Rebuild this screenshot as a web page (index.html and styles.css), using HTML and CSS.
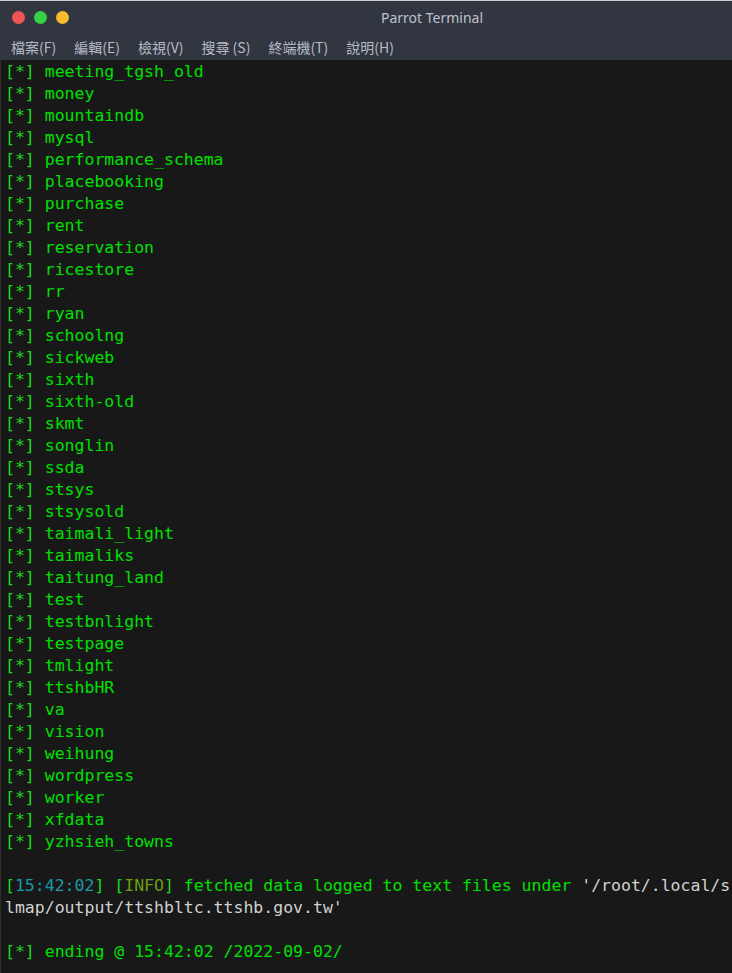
FILE: index.html
```html
<!DOCTYPE html>
<html>
<head>
<meta charset="utf-8">
<link rel="stylesheet" href="styles.css">
</head>
<body>
<div class="window">
  <div class="chrome">
    <div class="titlebar">
      <div class="lights">
        <span class="light red"></span>
        <span class="light green"></span>
        <span class="light yellow"></span>
      </div>
      <div class="title">Parrot Terminal</div>
    </div>
    <div class="menubar">
      <span class="menu">檔案(F)</span>
      <span class="menu">編輯(E)</span>
      <span class="menu">檢視(V)</span>
      <span class="menu">搜尋 (S)</span>
      <span class="menu">終端機(T)</span>
      <span class="menu">說明(H)</span>
    </div>
  </div>
  <div class="term">
<div class="ln"><span class="b">[*]</span> meeting_tgsh_old</div>
<div class="ln"><span class="b">[*]</span> money</div>
<div class="ln"><span class="b">[*]</span> mountaindb</div>
<div class="ln"><span class="b">[*]</span> mysql</div>
<div class="ln"><span class="b">[*]</span> performance_schema</div>
<div class="ln"><span class="b">[*]</span> placebooking</div>
<div class="ln"><span class="b">[*]</span> purchase</div>
<div class="ln"><span class="b">[*]</span> rent</div>
<div class="ln"><span class="b">[*]</span> reservation</div>
<div class="ln"><span class="b">[*]</span> ricestore</div>
<div class="ln"><span class="b">[*]</span> rr</div>
<div class="ln"><span class="b">[*]</span> ryan</div>
<div class="ln"><span class="b">[*]</span> schoolng</div>
<div class="ln"><span class="b">[*]</span> sickweb</div>
<div class="ln"><span class="b">[*]</span> sixth</div>
<div class="ln"><span class="b">[*]</span> sixth-old</div>
<div class="ln"><span class="b">[*]</span> skmt</div>
<div class="ln"><span class="b">[*]</span> songlin</div>
<div class="ln"><span class="b">[*]</span> ssda</div>
<div class="ln"><span class="b">[*]</span> stsys</div>
<div class="ln"><span class="b">[*]</span> stsysold</div>
<div class="ln"><span class="b">[*]</span> taimali_light</div>
<div class="ln"><span class="b">[*]</span> taimaliks</div>
<div class="ln"><span class="b">[*]</span> taitung_land</div>
<div class="ln"><span class="b">[*]</span> test</div>
<div class="ln"><span class="b">[*]</span> testbnlight</div>
<div class="ln"><span class="b">[*]</span> testpage</div>
<div class="ln"><span class="b">[*]</span> tmlight</div>
<div class="ln"><span class="b">[*]</span> ttshbHR</div>
<div class="ln"><span class="b">[*]</span> va</div>
<div class="ln"><span class="b">[*]</span> vision</div>
<div class="ln"><span class="b">[*]</span> weihung</div>
<div class="ln"><span class="b">[*]</span> wordpress</div>
<div class="ln"><span class="b">[*]</span> worker</div>
<div class="ln"><span class="b">[*]</span> xfdata</div>
<div class="ln"><span class="b">[*]</span> yzhsieh_towns</div>
<div class="ln"> </div>
<div class="ln"><span class="b">[</span><span class="ts">15:42:02</span><span class="b">]</span> <span class="b">[</span><span class="info">INFO</span><span class="b">]</span> fetched data logged to text files under <span class="path">'/root/.local/s</span></div>
<div class="ln path">lmap/output/ttshbltc.ttshb.gov.tw'</div>
<div class="ln"> </div>
<div class="ln"><span class="b">[*]</span> ending @ 15:42:02 /2022-09-02/</div>
  </div>
</div>
</body>
</html>
```
FILE: styles.css
```css
html, body {
  margin: 0;
  padding: 0;
  background: #181818;
  overflow: hidden;
}
.window {
  width: 732px;
  height: 973px;
  display: flex;
  flex-direction: column;
  overflow: hidden;
  border-top: 1px solid #cfcfcf;
  box-sizing: border-box;
}
.chrome {
  background: #323641;
  height: 59px;
  flex: none;
  display: flex;
  flex-direction: column;
}
.titlebar {
  height: 32px;
  display: flex;
  align-items: center;
}
.lights {
  display: flex;
  gap: 9px;
  padding-left: 12px;
}
.light {
  width: 13px;
  height: 13px;
  border-radius: 50%;
  display: block;
}
.red { background: #f05454; }
.green { background: #35d144; }
.yellow { background: #f7bb2c; }
.title {
  margin-left: 312px;
  font-family: "Noto Sans", "Open Sans", sans-serif;
  font-size: 14px;
  color: #bcc2cc;
}
.menubar {
  display: flex;
  align-items: center;
  height: 27px;
  padding-left: 2px;
  font-family: "Noto Sans CJK TC", "Noto Sans", sans-serif;
  font-size: 14px;
  color: #b6bcc6;
}
.menu {
  padding: 0 9px;
}
.term {
  flex: 1;
  padding: 1px 0 0 4px;
  border-left: 1px solid #2e2e2e;
  font-family: "DejaVu Sans Mono", monospace;
  font-size: 16.5px;
  line-height: 22px;
  color: #00e000;
  overflow: hidden;
}
.ln {
  height: 22px;
  white-space: pre;
}
.b { color: #1cd81c; }
.ts { color: #1d99a6; }
.info { color: #6a9c0e; }
.path { color: #d2d2d2; }
```
